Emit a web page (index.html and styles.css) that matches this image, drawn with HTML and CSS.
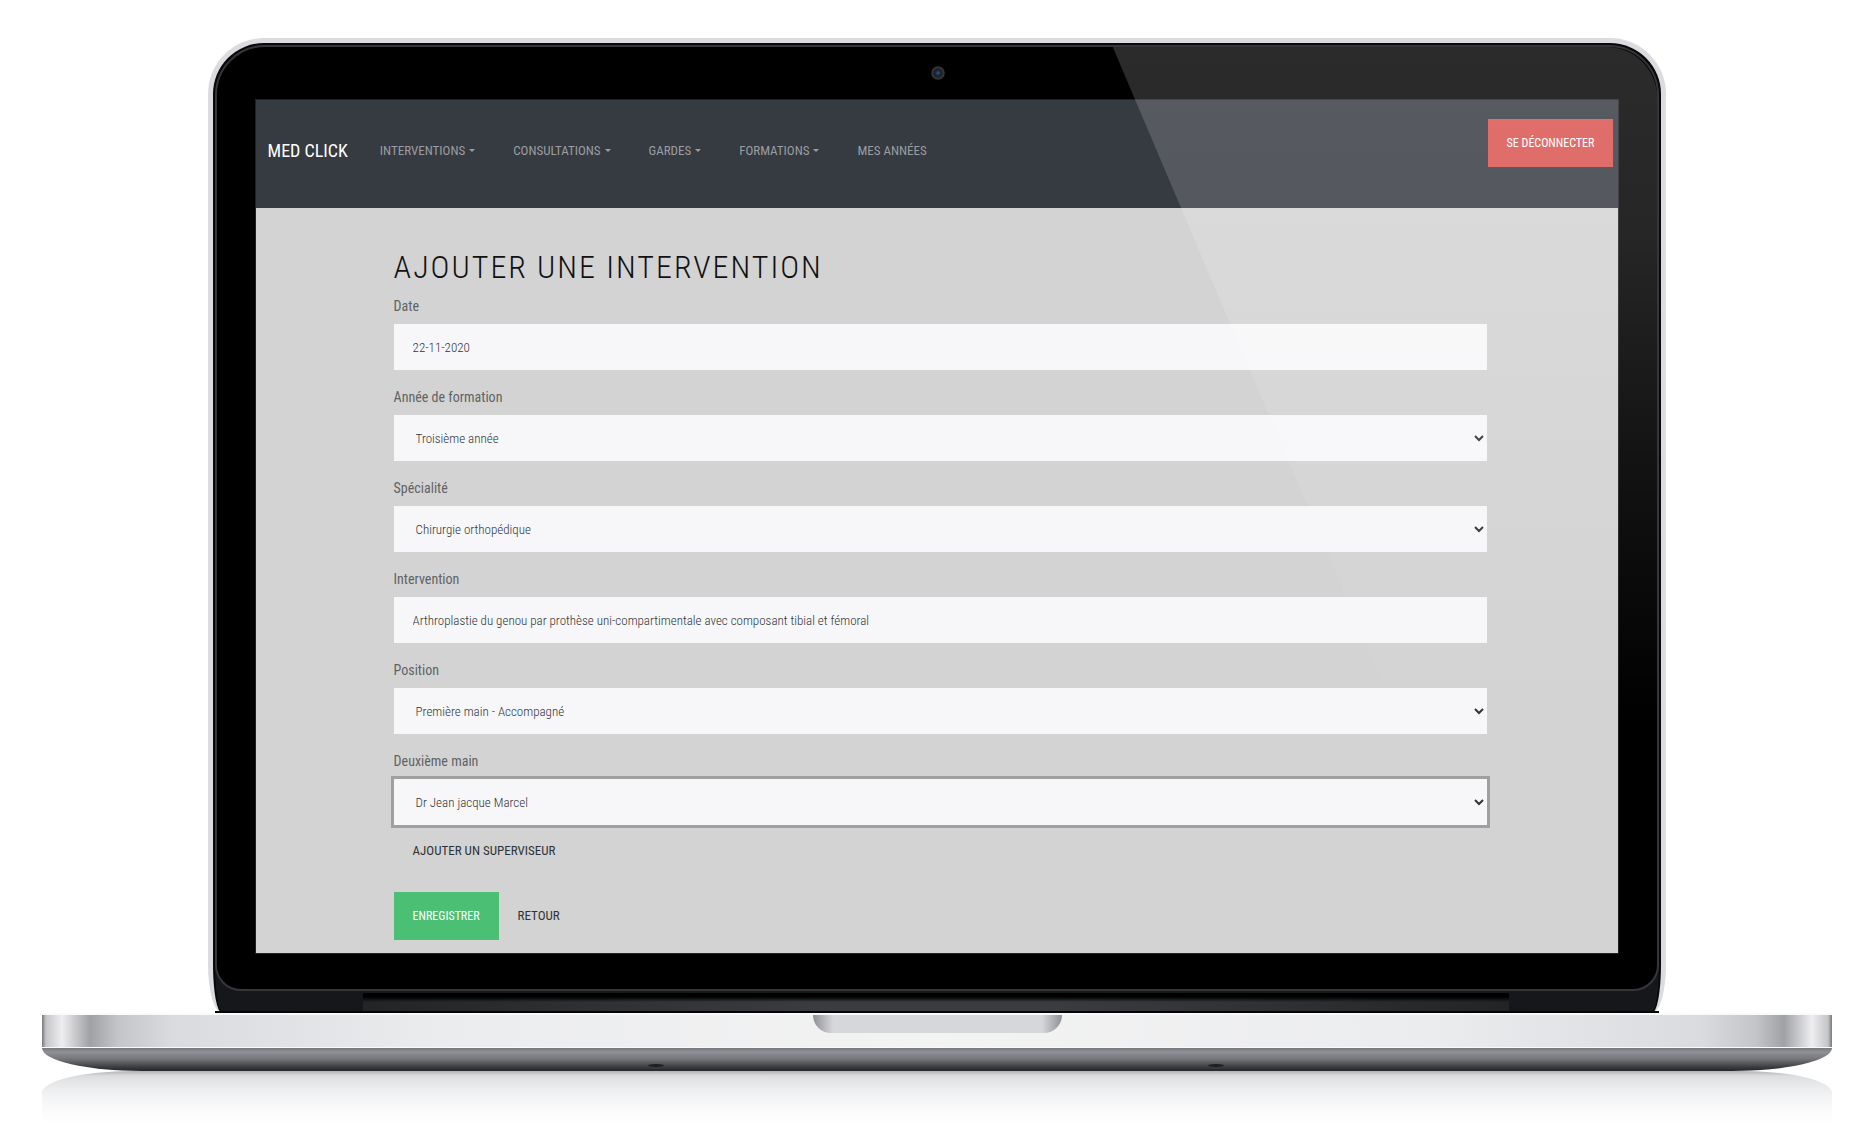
FILE: index.html
```html
<!DOCTYPE html>
<html lang="fr">
<head>
<meta charset="utf-8">
<meta name="viewport" content="width=device-width, initial-scale=1">
<title>Med Click - Ajouter une intervention</title>
<link rel="stylesheet" href="styles.css">
</head>
<body>
<div class="laptop">
  <div class="lid">
    <div class="glass">
      <span class="camera"></span>
      <div class="screen">
        <header class="navbar">
          <a class="brand" href="#">MED CLICK</a>
          <nav class="menu">
            <a class="menu-link has-caret" href="#">INTERVENTIONS</a>
            <a class="menu-link has-caret" href="#">CONSULTATIONS</a>
            <a class="menu-link has-caret" href="#">GARDES</a>
            <a class="menu-link has-caret" href="#">FORMATIONS</a>
            <a class="menu-link" href="#">MES ANNÉES</a>
          </nav>
          <button class="btn btn-danger" type="button">SE DÉCONNECTER</button>
        </header>
        <main class="content">
          <h1 class="title">AJOUTER UNE INTERVENTION</h1>
          <form class="form" id="intervention-form">
            <div class="group">
              <label class="label" for="date">Date</label>
              <input class="field" id="date" type="text" value="22-11-2020">
            </div>
            <div class="group">
              <label class="label" for="annee">Année de formation</label>
              <select class="field" id="annee"><option>Troisième année</option></select>
            </div>
            <div class="group">
              <label class="label" for="specialite">Spécialité</label>
              <select class="field" id="specialite"><option>Chirurgie orthopédique</option></select>
            </div>
            <div class="group">
              <label class="label" for="intervention">Intervention</label>
              <input class="field" id="intervention" type="text" value="Arthroplastie du genou par prothèse uni-compartimentale avec composant tibial et fémoral">
            </div>
            <div class="group">
              <label class="label" for="position">Position</label>
              <select class="field" id="position"><option>Première main - Accompagné</option></select>
            </div>
            <div class="group">
              <label class="label" for="main2">Deuxième main</label>
              <select class="field field-active" id="main2"><option>Dr Jean jacque Marcel</option></select>
            </div>
          </form>
          <a class="text-link" href="#">AJOUTER UN SUPERVISEUR</a>
          <div class="actions">
            <button class="btn btn-success" type="submit" form="intervention-form">ENREGISTRER</button>
            <a class="text-link" href="#">RETOUR</a>
          </div>
        </main>
      </div>
    </div>
    <div class="hinge"><div class="hinge-bar"></div></div>
    <div class="gloss"></div>
  </div>
  <div class="deck"><div class="notch"></div></div>
  <div class="underside"><span class="foot"></span><span class="foot"></span></div>
  <div class="reflection"></div>
</div>
</body>
</html>
```
FILE: styles.css
```css
* { box-sizing: border-box; }

body {
  margin: 0;
  padding: 38px 43px 0 42px;
  background: #fff;
  font-family: "Roboto Condensed", Roboto, sans-serif;
  font-size: 13px;
  font-weight: 400;
  line-height: 20px;
}

a { text-decoration: none; }

/* Lid */
.lid {
  position: relative;
  width: 81.5%;
  margin: 0 auto;
  padding: 2px 2px 0;
  border: 5px solid #dcdce0;
  border-bottom: 0;
  border-radius: 56px 56px 14px 14px / 56px 56px 48px 48px;
  background: #15171a;
  box-shadow: inset 0 0 0 2px #08090a, inset 0 2px 0 2px #08090a;
}

.glass {
  position: relative;
  padding: 53px 39px 36px 39px;
  border: 2px solid #34363a;
  border-radius: 50px 50px 26px 26px;
  background: #000;
}

.camera {
  position: absolute;
  top: 19px;
  left: 50%;
  width: 14px;
  height: 14px;
  margin-left: -6px;
  border-radius: 50%;
  background: radial-gradient(circle, #1c4a86 0 1px, #1b1e26 3px, #2a2a2c 5px, #3c3c3c 6px, #151515 7px);
}

.hinge { height: 22px; padding: 2px 150px 0 148px; border-bottom: 2px solid #050505; }

.hinge-bar {
  height: 18px;
  background:
    linear-gradient(#000 0 4px, transparent 9px),
    linear-gradient(90deg, #222426, #3b3c40 40%, #3b3c40 60%, #222426);
}

.gloss {
  position: absolute;
  top: 4px;
  left: 4px;
  right: 4px;
  bottom: 22px;
  border-radius: 50px 50px 26px 26px;
  background: linear-gradient(rgba(255,255,255,.17), rgba(255,255,255,.15) 20%, rgba(255,255,255,.07) 45%, rgba(255,255,255,0) 72%);
  clip-path: polygon(62.2% 0, 100% 0, 100% 100%, 90% 100%);
  pointer-events: none;
}

/* Application */
.screen { background: #d3d3d3; box-shadow: 0 0 0 1px #222; }

.navbar {
  display: flex;
  align-items: flex-start;
  height: 108px;
  padding: 19px 5px 0 12px;
  background: #363a41;
}

.brand {
  padding-top: 20px;
  margin-right: 13px;
  color: #fff;
  font-size: 18px;
  line-height: 24px;
}

.menu { display: flex; flex: 1; padding-top: 22px; }

.menu-link { padding: 0 19px; color: #9b9da0; }

.has-caret::after {
  content: "";
  display: inline-block;
  margin-left: 4px;
  vertical-align: 3px;
  border: 3px solid transparent;
  border-top-color: currentColor;
  border-bottom: 0;
}

.btn {
  height: 48px;
  padding: 0 19px;
  border: 0;
  color: #fff;
  font: 400 12px/20px "Roboto Condensed", Roboto, sans-serif;
}

.btn-danger { background: #d9534f; }
.btn-success { background: #4bbf73; }

.content { padding: 40px 131px 13px 138px; }

.title {
  margin: 0 0 9px;
  color: #111;
  font-size: 32px;
  font-weight: 300;
  line-height: 39px;
  letter-spacing: 2px;
}

.form { display: grid; gap: 17px; }
.group { display: grid; gap: 8px; }
.label { color: #606366; font-size: 14px; }

.field {
  width: 100%;
  height: 46px;
  padding: 0 19px;
  border: 0;
  border-radius: 0;
  background-color: #f7f7f9;
  color: #303438;
  font: 300 13px/20px "Roboto Condensed", Roboto, sans-serif;
}

select.field { padding: 0 0 0 18px; }
.field-active { outline: 3px solid #a0a0a0; }

.text-link { display: inline-block; margin: 16px 0 0 19px; color: #303337; }

.actions { display: flex; align-items: center; margin-top: 31px; }
.actions .text-link { margin-top: 0; }

/* Base */
.deck {
  height: 35px;
  border-top: 2px solid #fafafa;
  border-bottom: 1px solid #fafafa;
  background: linear-gradient(90deg,
    #77787b 0, #c4c5c8 4px, #eeeef0 20px, #a0a1a5 48px, #c4c5c9 76px, #dadbde 130px, #ebecee 400px,
    #f3f3f3 50%,
    #ebecee calc(100% - 400px), #dadbde calc(100% - 130px), #c4c5c9 calc(100% - 76px),
    #a0a1a5 calc(100% - 48px), #eeeef0 calc(100% - 20px), #c4c5c8 calc(100% - 4px), #77787b 100%);
}

.notch {
  width: 249px;
  height: 18px;
  margin: 0 auto;
  border-radius: 0 0 20px 20px;
  background: linear-gradient(90deg, #8f9095, #d6d7db 20px, #d6d7db calc(100% - 20px), #8f9095);
}

.underside {
  display: flex;
  justify-content: space-between;
  align-items: flex-end;
  height: 23px;
  padding: 0 608px 4px 606px;
  border-radius: 0 0 100px 100px / 0 0 23px 23px;
  background: linear-gradient(#77787c, #909196 4px, #75767a 11px, #3c3d40 19px, #242527);
}

.foot { width: 16px; height: 3px; border-radius: 50%; background: #1d1e20; }

.reflection {
  height: 53px;
  border-radius: 90px 90px 0 0 / 22px 22px 0 0;
  background: linear-gradient(#b4b2b0, #dcdddf 5px, #e8e9eb 14px, #f3f4f5 26px, #fafafa 38px, #fff);
}
```
